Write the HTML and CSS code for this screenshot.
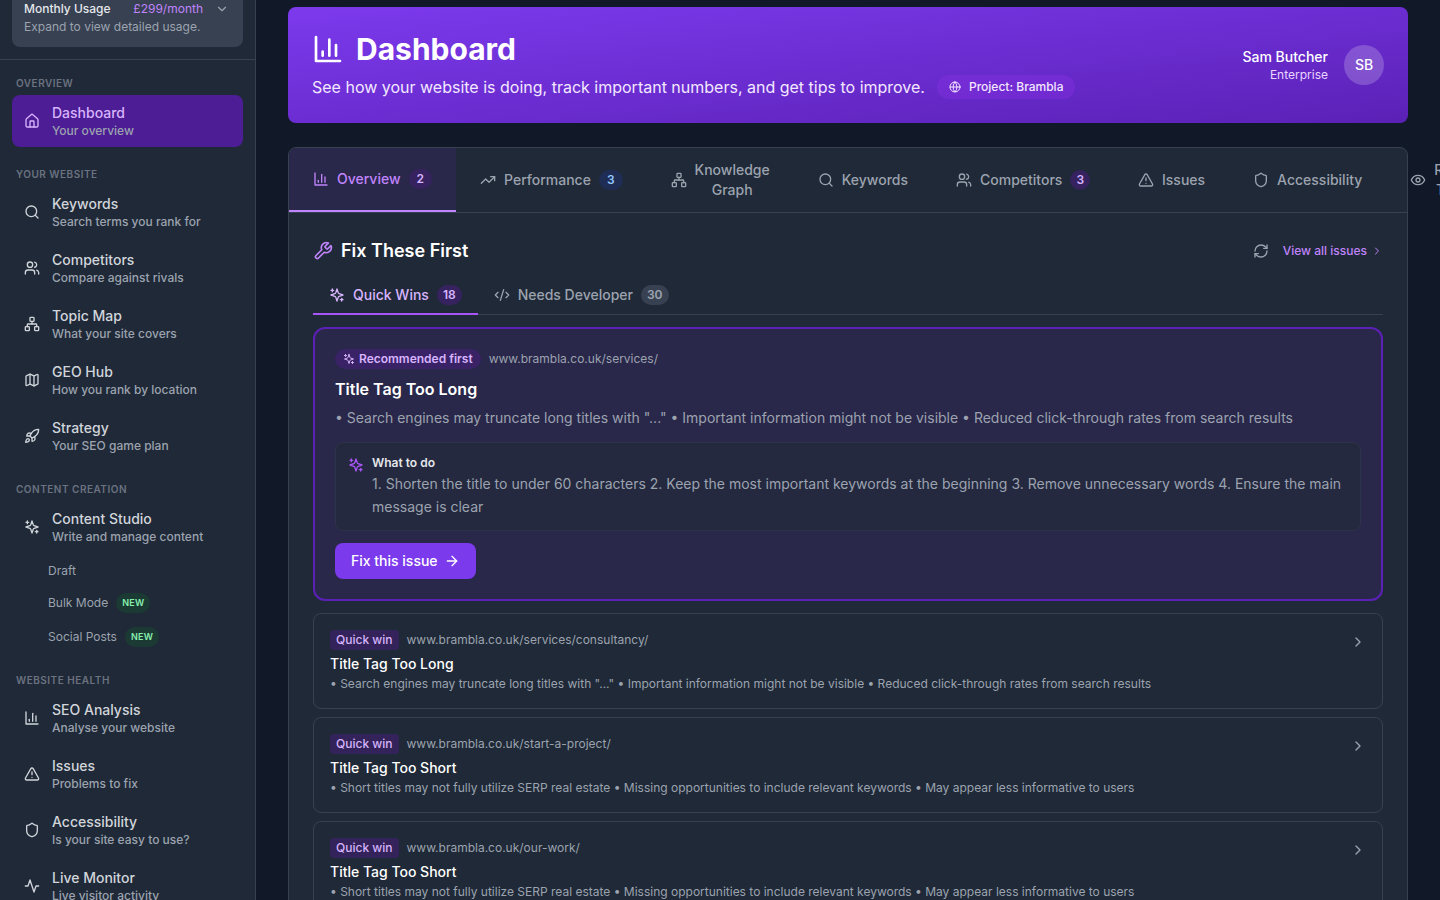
FILE: index.html
```html
<!DOCTYPE html>
<html lang="en">
<head>
  <meta charset="UTF-8">
  <meta name="viewport" content="width=device-width, initial-scale=1.0">
  <title>Dashboard</title>
  <link rel="stylesheet" href="styles.css">
</head>
<body>

  <!-- Icon sprite -->
  <svg class="sprite" aria-hidden="true">
    <symbol id="i-home" viewBox="0 0 24 24"><path d="M15 21v-8a1 1 0 0 0-1-1h-4a1 1 0 0 0-1 1v8"/><path d="M3 10a2 2 0 0 1 .709-1.528l7-5.999a2 2 0 0 1 2.582 0l7 5.999A2 2 0 0 1 21 10v9a2 2 0 0 1-2 2H5a2 2 0 0 1-2-2z"/></symbol>
    <symbol id="i-search" viewBox="0 0 24 24"><circle cx="11" cy="11" r="8"/><path d="m21 21-4.3-4.3"/></symbol>
    <symbol id="i-users" viewBox="0 0 24 24"><path d="M16 21v-2a4 4 0 0 0-4-4H6a4 4 0 0 0-4 4v2"/><circle cx="9" cy="7" r="4"/><path d="M22 21v-2a4 4 0 0 0-3-3.87"/><path d="M16 3.13a4 4 0 0 1 0 7.75"/></symbol>
    <symbol id="i-network" viewBox="0 0 24 24"><rect x="16" y="16" width="6" height="6" rx="1"/><rect x="2" y="16" width="6" height="6" rx="1"/><rect x="9" y="2" width="6" height="6" rx="1"/><path d="M5 16v-3a1 1 0 0 1 1-1h12a1 1 0 0 1 1 1v3"/><path d="M12 12V8"/></symbol>
    <symbol id="i-map" viewBox="0 0 24 24"><path d="M14.106 5.553a2 2 0 0 0 1.788 0l3.659-1.83A1 1 0 0 1 21 4.619v12.764a1 1 0 0 1-.553.894l-4.553 2.277a2 2 0 0 1-1.788 0l-4.212-2.106a2 2 0 0 0-1.788 0l-3.659 1.83A1 1 0 0 1 3 19.381V6.618a1 1 0 0 1 .553-.894l4.553-2.277a2 2 0 0 1 1.788 0z"/><path d="M15 5.764v15"/><path d="M9 3.236v15"/></symbol>
    <symbol id="i-rocket" viewBox="0 0 24 24"><path d="M4.500 16.500c-1.500 1.260-2 5-2 5s3.740-.5 5-2c.71-.84.7-2.130-.09-2.910a2.180 2.180 0 0 0-2.910-.09z"/><path d="m12 15-3-3a22 22 0 0 1 2-3.950A12.880 12.880 0 0 1 22 2c0 2.720-.78 7.500-6 11a22.350 22.350 0 0 1-4 2z"/><path d="M9 12H4s.55-3.030 2-4c1.620-1.080 5 0 5 0"/><path d="M12 15v5s3.030-.55 4-2c1.080-1.620 0-5 0-5"/></symbol>
    <symbol id="i-sparkles" viewBox="0 0 24 24"><path d="m12 3-1.912 5.813a2 2 0 0 1-1.275 1.275L3 12l5.813 1.912a2 2 0 0 1 1.275 1.275L12 21l1.912-5.813a2 2 0 0 1 1.275-1.275L21 12l-5.813-1.912a2 2 0 0 1-1.275-1.275L12 3Z"/><path d="M5 3v4"/><path d="M19 17v4"/><path d="M3 5h4"/><path d="M17 19h4"/></symbol>
    <symbol id="i-chart" viewBox="0 0 24 24"><path d="M3 3v18h18"/><path d="M18 17V9"/><path d="M13 17V5"/><path d="M8 17v-3"/></symbol>
    <symbol id="i-alert" viewBox="0 0 24 24"><path d="m21.730 18-8-14a2 2 0 0 0-3.480 0l-8 14A2 2 0 0 0 4 21h16a2 2 0 0 0 1.730-3Z"/><path d="M12 9v4"/><path d="M12 17h.01"/></symbol>
    <symbol id="i-shield" viewBox="0 0 24 24"><path d="M20 13c0 5-3.500 7.500-7.660 8.950a1 1 0 0 1-.67-.01C7.500 20.500 4 18 4 13V6a1 1 0 0 1 1-1c2 0 4.500-1.200 6.240-2.720a1.170 1.170 0 0 1 1.520 0C14.510 3.810 17 5 19 5a1 1 0 0 1 1 1z"/></symbol>
    <symbol id="i-activity" viewBox="0 0 24 24"><path d="M22 12h-4l-3 9L9 3l-3 9H2"/></symbol>
    <symbol id="i-trend" viewBox="0 0 24 24"><path d="m22 7-8.500 8.500-5-5L2 17"/><path d="M16 7h6v6"/></symbol>
    <symbol id="i-eye" viewBox="0 0 24 24"><path d="M2 12s3-7 10-7 10 7 10 7-3 7-10 7-10-7-10-7Z"/><circle cx="12" cy="12" r="3"/></symbol>
    <symbol id="i-globe" viewBox="0 0 24 24"><circle cx="12" cy="12" r="10"/><path d="M12 2a14.500 14.500 0 0 0 0 20 14.500 14.500 0 0 0 0-20"/><path d="M2 12h20"/></symbol>
    <symbol id="i-wrench" viewBox="0 0 24 24"><path d="M14.700 6.300a1 1 0 0 0 0 1.400l1.600 1.600a1 1 0 0 0 1.400 0l3.770-3.770a6 6 0 0 1-7.940 7.940l-6.910 6.910a2.120 2.120 0 0 1-3-3l6.910-6.910a6 6 0 0 1 7.940-7.940l-3.760 3.760z"/></symbol>
    <symbol id="i-refresh" viewBox="0 0 24 24"><path d="M3 12a9 9 0 0 1 9-9 9.750 9.750 0 0 1 6.740 2.740L21 8"/><path d="M21 3v5h-5"/><path d="M21 12a9 9 0 0 1-9 9 9.750 9.750 0 0 1-6.740-2.740L3 16"/><path d="M8 16H3v5"/></symbol>
    <symbol id="i-code" viewBox="0 0 24 24"><path d="m18 16 4-4-4-4"/><path d="m6 8-4 4 4 4"/><path d="m14.500 4-5 16"/></symbol>
    <symbol id="i-arrow" viewBox="0 0 24 24"><path d="M5 12h14"/><path d="m12 5 7 7-7 7"/></symbol>
    <symbol id="i-right" viewBox="0 0 24 24"><path d="m9 18 6-6-6-6"/></symbol>
    <symbol id="i-down" viewBox="0 0 24 24"><path d="m6 9 6 6 6-6"/></symbol>
  </svg>

  <div class="layout">

    <!-- Sidebar -->
    <aside class="sidebar">
      <div class="usage-wrap">
        <button type="button" class="usage">
          <span class="usage-row">
            <span class="usage-title">Monthly Usage</span>
            <span class="usage-price">£299/month</span>
            <svg class="icon icon-md"><use href="#i-down"/></svg>
          </span>
          <span class="usage-note">Expand to view detailed usage.</span>
        </button>
      </div>

      <nav class="nav">
        <section>
          <h2 class="nav-label">Overview</h2>
          <div class="nav-list">
            <a href="#" class="nav-item active">
              <svg class="icon"><use href="#i-home"/></svg>
              <span class="nav-text"><span class="nav-title">Dashboard</span><span class="nav-sub">Your overview</span></span>
            </a>
          </div>
        </section>

        <section>
          <h2 class="nav-label">Your website</h2>
          <div class="nav-list">
            <a href="#" class="nav-item">
              <svg class="icon"><use href="#i-search"/></svg>
              <span class="nav-text"><span class="nav-title">Keywords</span><span class="nav-sub">Search terms you rank for</span></span>
            </a>
            <a href="#" class="nav-item">
              <svg class="icon"><use href="#i-users"/></svg>
              <span class="nav-text"><span class="nav-title">Competitors</span><span class="nav-sub">Compare against rivals</span></span>
            </a>
            <a href="#" class="nav-item">
              <svg class="icon"><use href="#i-network"/></svg>
              <span class="nav-text"><span class="nav-title">Topic Map</span><span class="nav-sub">What your site covers</span></span>
            </a>
            <a href="#" class="nav-item">
              <svg class="icon"><use href="#i-map"/></svg>
              <span class="nav-text"><span class="nav-title">GEO Hub</span><span class="nav-sub">How you rank by location</span></span>
            </a>
            <a href="#" class="nav-item">
              <svg class="icon"><use href="#i-rocket"/></svg>
              <span class="nav-text"><span class="nav-title">Strategy</span><span class="nav-sub">Your SEO game plan</span></span>
            </a>
          </div>
        </section>

        <section>
          <h2 class="nav-label">Content creation</h2>
          <div class="nav-list">
            <a href="#" class="nav-item">
              <svg class="icon"><use href="#i-sparkles"/></svg>
              <span class="nav-text"><span class="nav-title">Content Studio</span><span class="nav-sub">Write and manage content</span></span>
            </a>
            <div class="subnav">
              <a href="#" class="subnav-item">Draft</a>
              <a href="#" class="subnav-item">Bulk Mode <span class="new">NEW</span></a>
              <a href="#" class="subnav-item">Social Posts <span class="new">NEW</span></a>
            </div>
          </div>
        </section>

        <section>
          <h2 class="nav-label">Website health</h2>
          <div class="nav-list">
            <a href="#" class="nav-item">
              <svg class="icon"><use href="#i-chart"/></svg>
              <span class="nav-text"><span class="nav-title">SEO Analysis</span><span class="nav-sub">Analyse your website</span></span>
            </a>
            <a href="#" class="nav-item">
              <svg class="icon"><use href="#i-alert"/></svg>
              <span class="nav-text"><span class="nav-title">Issues</span><span class="nav-sub">Problems to fix</span></span>
            </a>
            <a href="#" class="nav-item">
              <svg class="icon"><use href="#i-shield"/></svg>
              <span class="nav-text"><span class="nav-title">Accessibility</span><span class="nav-sub">Is your site easy to use?</span></span>
            </a>
            <a href="#" class="nav-item">
              <svg class="icon"><use href="#i-activity"/></svg>
              <span class="nav-text"><span class="nav-title">Live Monitor</span><span class="nav-sub">Live visitor activity</span></span>
            </a>
          </div>
        </section>
      </nav>
    </aside>

    <!-- Main column -->
    <main class="main">
      <header class="hero">
        <div class="hero-text">
          <h1><svg class="icon icon-xl"><use href="#i-chart"/></svg>Dashboard</h1>
          <div class="hero-row">
            <p>See how your website is doing, track important numbers, and get tips to improve.</p>
            <span class="project"><svg class="icon icon-sm"><use href="#i-globe"/></svg>Project: Brambla</span>
          </div>
        </div>
        <div class="user">
          <div class="user-info">
            <span class="user-name">Sam Butcher</span>
            <span class="user-plan">Enterprise</span>
          </div>
          <span class="avatar">SB</span>
        </div>
      </header>

      <div class="panel">
        <div class="tabs">
          <button type="button" class="tab active"><svg class="icon"><use href="#i-chart"/></svg>Overview<span class="count count-wide">2</span></button>
          <button type="button" class="tab"><svg class="icon"><use href="#i-trend"/></svg>Performance<span class="count count-wide count-blue">3</span></button>
          <button type="button" class="tab"><svg class="icon"><use href="#i-network"/></svg>Knowledge Graph</button>
          <button type="button" class="tab"><svg class="icon"><use href="#i-search"/></svg>Keywords</button>
          <button type="button" class="tab"><svg class="icon"><use href="#i-users"/></svg>Competitors<span class="count">3</span></button>
          <button type="button" class="tab"><svg class="icon"><use href="#i-alert"/></svg>Issues</button>
          <button type="button" class="tab"><svg class="icon"><use href="#i-shield"/></svg>Accessibility</button>
          <button type="button" class="tab"><svg class="icon"><use href="#i-eye"/></svg>Recent Traffic</button>
        </div>

        <div class="panel-body">
          <div class="section-head">
            <h2><svg class="icon icon-lg"><use href="#i-wrench"/></svg>Fix These First</h2>
            <div class="section-actions">
              <button type="button" class="refresh" aria-label="Refresh"><svg class="icon"><use href="#i-refresh"/></svg></button>
              <a href="#" class="view-all">View all issues<svg class="icon icon-sm"><use href="#i-right"/></svg></a>
            </div>
          </div>

          <div class="subtabs">
            <button type="button" class="subtab active"><svg class="icon"><use href="#i-sparkles"/></svg>Quick Wins<span class="count">18</span></button>
            <button type="button" class="subtab"><svg class="icon"><use href="#i-code"/></svg>Needs Developer<span class="count count-gray">30</span></button>
          </div>

          <!-- Top recommendation -->
          <article class="featured">
            <div class="meta">
              <span class="recommended"><svg class="icon icon-sm"><use href="#i-sparkles"/></svg>Recommended first</span>
              <span class="url">www.brambla.co.uk/services/</span>
            </div>
            <h3>Title Tag Too Long</h3>
            <p>• Search engines may truncate long titles with "..." • Important information might not be visible • Reduced click-through rates from search results</p>
            <div class="todo">
              <svg class="icon"><use href="#i-sparkles"/></svg>
              <div>
                <h4>What to do</h4>
                <p>1. Shorten the title to under 60 characters 2. Keep the most important keywords at the beginning 3. Remove unnecessary words 4. Ensure the main message is clear</p>
              </div>
            </div>
            <button type="button" class="fix">Fix this issue<svg class="icon"><use href="#i-arrow"/></svg></button>
          </article>

          <!-- Remaining quick wins -->
          <div class="issues">
            <a href="#" class="issue">
              <div class="issue-body">
                <div class="meta"><span class="tag">Quick win</span><span class="url">www.brambla.co.uk/services/consultancy/</span></div>
                <h3>Title Tag Too Long</h3>
                <p>• Search engines may truncate long titles with "..." • Important information might not be visible • Reduced click-through rates from search results</p>
              </div>
              <svg class="icon"><use href="#i-right"/></svg>
            </a>
            <a href="#" class="issue">
              <div class="issue-body">
                <div class="meta"><span class="tag">Quick win</span><span class="url">www.brambla.co.uk/start-a-project/</span></div>
                <h3>Title Tag Too Short</h3>
                <p>• Short titles may not fully utilize SERP real estate • Missing opportunities to include relevant keywords • May appear less informative to users</p>
              </div>
              <svg class="icon"><use href="#i-right"/></svg>
            </a>
            <a href="#" class="issue">
              <div class="issue-body">
                <div class="meta"><span class="tag">Quick win</span><span class="url">www.brambla.co.uk/our-work/</span></div>
                <h3>Title Tag Too Short</h3>
                <p>• Short titles may not fully utilize SERP real estate • Missing opportunities to include relevant keywords • May appear less informative to users</p>
              </div>
              <svg class="icon"><use href="#i-right"/></svg>
            </a>
          </div>
        </div>
      </div>
    </main>
  </div>

</body>
</html>
```
FILE: styles.css
```css
* {
  box-sizing: border-box;
}

body {
  margin: 0;
  background: #111827;
  color: #9ca3af;
  font-family: Inter, "Liberation Sans", sans-serif;
  font-size: 14px;
  line-height: 20px;
}

h1, h2, h3, h4, p {
  margin: 0;
}

a {
  color: inherit;
  text-decoration: none;
}

button {
  border: none;
  background: none;
  color: inherit;
  font: inherit;
  cursor: pointer;
}

/* Icons */
.sprite {
  display: none;
}

.icon {
  width: 16px;
  height: 16px;
  flex-shrink: 0;
  fill: none;
  stroke: currentColor;
  stroke-width: 2;
  stroke-linecap: round;
  stroke-linejoin: round;
}

.icon-sm {
  width: 12px;
  height: 12px;
}

.icon-md {
  width: 14px;
  height: 14px;
}

.icon-lg {
  width: 20px;
  height: 20px;
}

.icon-xl {
  width: 32px;
  height: 32px;
}

.layout {
  display: flex;
  height: 100vh;
  overflow: hidden;
}

/* Sidebar */
.sidebar {
  width: 256px;
  flex-shrink: 0;
  overflow: hidden;
  background: #1f2937;
  border-right: 1px solid #374151;
}

.usage-wrap {
  padding: 0 12px 12px;
  border-bottom: 1px solid #374151;
}

.usage {
  display: flex;
  flex-direction: column;
  gap: 2px;
  width: 100%;
  padding: 1px 12px 12px;
  border-radius: 0 0 8px 8px;
  background: #374151;
  font-size: 12px;
  line-height: 16px;
  text-align: left;
}

.usage-row {
  display: flex;
  align-items: center;
  gap: 12px;
  padding-right: 2px;
}

.usage-title {
  flex: 1;
  color: #e5e7eb;
  font-weight: 500;
}

.usage-price {
  color: #c084fc;
}

.nav {
  display: flex;
  flex-direction: column;
  gap: 16px;
  padding: 12px;
}

.nav-label {
  padding: 4px;
  color: #6b7280;
  font-size: 10px;
  font-weight: 600;
  line-height: 15px;
  letter-spacing: 0.05em;
  text-transform: uppercase;
}

.nav-list {
  display: flex;
  flex-direction: column;
  gap: 4px;
}

.nav-item {
  display: flex;
  align-items: center;
  gap: 12px;
  padding: 8px 12px;
  border-radius: 8px;
  color: #d1d5db;
  font-weight: 500;
}

.nav-item.active {
  background: #4c1d95;
  color: #d8b4fe;
}

.nav-text {
  display: flex;
  flex-direction: column;
}

.nav-sub {
  color: #9ca3af;
  font-size: 12px;
  line-height: 16px;
}

.subnav {
  display: flex;
  flex-direction: column;
  gap: 2px;
  padding-left: 24px;
}

.subnav-item {
  display: flex;
  align-items: center;
  gap: 8px;
  padding: 6px 12px;
  font-size: 12px;
  line-height: 16px;
}

.new {
  padding: 0 6px;
  border-radius: 10px;
  background: #1c3a34;
  color: #86efac;
  font-size: 9px;
  font-weight: 600;
  line-height: 20px;
  letter-spacing: 0.025em;
}

/* Main column */
.main {
  flex: 1;
  min-width: 0;
  padding: 7px 32px 0;
  overflow: hidden;
}

.hero {
  display: flex;
  align-items: center;
  justify-content: space-between;
  margin-bottom: 24px;
  padding: 24px;
  border-radius: 8px;
  background: linear-gradient(to bottom right, #7c3aed, #5b21b6);
  color: #fff;
}

.hero h1 {
  display: flex;
  align-items: center;
  gap: 12px;
  margin-bottom: 8px;
  font-size: 30px;
  font-weight: 700;
  line-height: 36px;
}

.hero-row {
  display: flex;
  align-items: center;
  gap: 12px;
  color: #f3e8ff;
}

.hero-row p {
  font-size: 16px;
  line-height: 24px;
}

.project {
  display: flex;
  align-items: center;
  gap: 8px;
  padding: 4px 12px;
  border-radius: 12px;
  background: rgba(147, 51, 234, 0.3);
  font-size: 12px;
  font-weight: 500;
  line-height: 16px;
}

.user {
  display: flex;
  align-items: center;
  gap: 16px;
}

.user-info {
  display: flex;
  flex-direction: column;
  text-align: right;
}

.user-name {
  font-weight: 500;
}

.user-plan {
  color: #e9d5ff;
  font-size: 12px;
  line-height: 16px;
}

.avatar {
  width: 40px;
  border-radius: 50%;
  background: rgba(255, 255, 255, 0.2);
  font-weight: 500;
  line-height: 40px;
  text-align: center;
}

/* Panel and tabs */
.panel {
  border: 1px solid #374151;
  border-radius: 8px;
  background: #1f2937;
}

.tabs {
  display: flex;
  border-bottom: 1px solid #374151;
}

.tab {
  display: flex;
  align-items: center;
  gap: 8px;
  padding: 12px 24px;
  font-weight: 500;
}

.tab.active {
  border-bottom: 2px solid #c084fc;
  border-top-left-radius: 7px;
  background: #29274a;
  color: #c084fc;
}

.count {
  padding: 0 6px;
  border-radius: 10px;
  background: #36225f;
  color: #d8b4fe;
  font-size: 12px;
  font-weight: 600;
  line-height: 20px;
}

.count-wide {
  padding: 0 8px;
}

.count-blue {
  background: #1f2d54;
  color: #93c5fd;
}

.count-gray {
  background: #374151;
  color: #9ca3af;
}

.panel-body {
  padding: 24px;
}

.section-head {
  display: flex;
  align-items: center;
  justify-content: space-between;
  margin-bottom: 12px;
}

.section-head h2 {
  display: flex;
  align-items: center;
  gap: 8px;
  color: #fff;
  font-size: 18px;
  font-weight: 600;
  line-height: 28px;
}

.section-head h2 .icon {
  color: #c084fc;
}

.section-actions {
  display: flex;
  align-items: center;
  gap: 8px;
}

.refresh {
  display: flex;
  padding: 6px;
}

.view-all {
  display: flex;
  align-items: center;
  gap: 4px;
  color: #c084fc;
  font-size: 12px;
  font-weight: 500;
  line-height: 16px;
}

.subtabs {
  display: flex;
  margin-bottom: 12px;
  border-bottom: 1px solid #374151;
}

.subtab {
  display: flex;
  align-items: center;
  gap: 8px;
  margin-bottom: -1px;
  padding: 8px 16px;
  border-bottom: 2px solid transparent;
  font-weight: 500;
}

.subtab.active {
  border-color: #a855f7;
  color: #d8b4fe;
}

/* Issue cards */
.meta {
  display: flex;
  align-items: center;
  gap: 8px;
  font-size: 12px;
  line-height: 20px;
}

.featured {
  margin-bottom: 12px;
  padding: 20px;
  border: 2px solid #5b21b6;
  border-radius: 12px;
  background: #29274a;
}

.recommended {
  display: flex;
  align-items: center;
  gap: 4px;
  padding: 0 8px;
  border-radius: 10px;
  background: #3a2266;
  color: #d8b4fe;
  font-weight: 600;
}

.featured h3 {
  margin: 8px 0 5px;
  color: #fff;
  font-size: 16px;
  font-weight: 600;
  line-height: 24px;
}

.featured p {
  line-height: 23px;
}

.todo {
  display: flex;
  gap: 8px;
  margin: 13px 0 12px;
  padding: 12px;
  border: 1px solid #2d3348;
  border-radius: 8px;
  background: #24293f;
}

.todo .icon {
  margin-top: 2px;
  color: #a855f7;
}

.todo h4 {
  margin-bottom: 1px;
  color: #e5e7eb;
  font-size: 12px;
  font-weight: 600;
  line-height: 16px;
}

.fix {
  display: flex;
  align-items: center;
  gap: 6px;
  padding: 8px 16px;
  border-radius: 8px;
  background: #7c3aed;
  color: #fff;
  font-weight: 500;
}

.issues {
  display: flex;
  flex-direction: column;
  gap: 8px;
}

.issue {
  display: flex;
  gap: 12px;
  padding: 16px;
  border: 1px solid #374151;
  border-radius: 8px;
}

.issue > .icon {
  margin-top: 4px;
}

.issue-body {
  flex: 1;
  min-width: 0;
}

.tag {
  padding: 0 6px;
  border-radius: 4px;
  background: #33235a;
  color: #d8b4fe;
  font-weight: 500;
}

.issue h3 {
  margin: 4px 0 2px;
  color: #fff;
  font-size: 14px;
  font-weight: 500;
  line-height: 20px;
}

.issue p {
  font-size: 12px;
  line-height: 16px;
}
```
